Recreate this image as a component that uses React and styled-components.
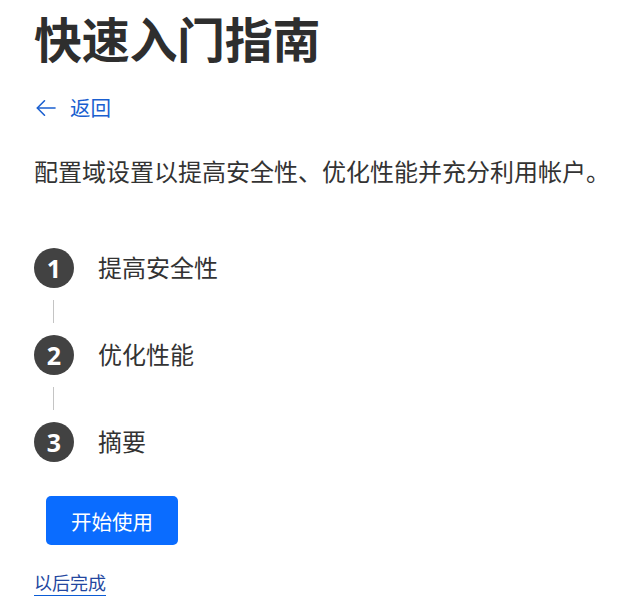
import React from 'react'
import styled, { createGlobalStyle } from 'styled-components'

const GlobalStyle = createGlobalStyle`
  html, body {
    margin: 0;
    padding: 0;
    background: #ffffff;
  }
  body {
    font-family: "Noto Sans", "Noto Sans CJK SC", sans-serif;
    color: #333333;
  }
`

const steps = [
  { id: 1, title: '提高安全性' },
  { id: 2, title: '优化性能' },
  { id: 3, title: '摘要' },
]

function BackArrow() {
  return (
    <svg width="22" height="20" viewBox="0 0 22 20" fill="none" stroke="currentColor"
      strokeWidth="1.6" strokeLinecap="round" strokeLinejoin="round">
      <path d="M21 10H3.5" />
      <path d="M10.5 2.8L3.3 10l7.2 7.2" />
    </svg>
  )
}

function App() {
  return (
    <Page>
      <GlobalStyle />
      <Title>快速入门指南</Title>
      <BackLink href="#">
        <BackArrow />
        <span>返回</span>
      </BackLink>
      <Description>配置域设置以提高安全性、优化性能并充分利用帐户。</Description>
      <StepList>
        {steps.map((step, i) => (
          <React.Fragment key={step.id}>
            <Step>
              <StepNumber>{step.id}</StepNumber>
              <StepTitle>{step.title}</StepTitle>
            </Step>
            {i < steps.length - 1 && <Connector />}
          </React.Fragment>
        ))}
      </StepList>
      <StartButton>开始使用</StartButton>
      <LaterLink href="#">以后完成</LaterLink>
    </Page>
  )
}

const Page = styled.main`
  display: flex;
  flex-direction: column;
  align-items: flex-start;
  padding: 12px 10px 0 34px;
`

const Title = styled.h1`
  margin: 0;
  font-size: 48px;
  line-height: 56px;
  font-weight: 700;
  color: #2e2e2e;
  letter-spacing: -0.3px;
`

const BackLink = styled.a`
  display: flex;
  align-items: center;
  gap: 14px;
  margin-top: 28px;
  color: #1a5fd0;
  text-decoration: none;
  font-size: 20.5px;
  line-height: 24px;
  svg {
    flex: none;
  }
`

const Description = styled.p`
  margin: 36px 0 0;
  font-size: 24px;
  line-height: 32px;
  color: #333333;
  white-space: nowrap;
`

const StepList = styled.ol`
  list-style: none;
  margin: 60px 0 0;
  padding: 0;
  display: flex;
  flex-direction: column;
`

const Step = styled.li`
  display: flex;
  align-items: center;
  gap: 24px;
`

const StepNumber = styled.span`
  width: 40px;
  height: 40px;
  border-radius: 50%;
  background: #424242;
  color: #ffffff;
  display: flex;
  align-items: center;
  justify-content: center;
  font-family: "Open Sans", "Noto Sans", sans-serif;
  font-weight: 700;
  font-size: 25px;
  line-height: 1;
`

const StepTitle = styled.span`
  font-size: 24px;
  line-height: 32px;
  color: #333333;
`

const Connector = styled.li`
  width: 1px;
  height: 23px;
  margin: 12px 0 12px 19px;
  background: #c4c4c4;
`

const StartButton = styled.button`
  margin: 34px 0 0 12px;
  height: 49px;
  padding: 0 25px;
  border: none;
  border-radius: 5px;
  background: #0a6cff;
  color: #ffffff;
  font-family: "Noto Sans", "Noto Sans CJK SC", sans-serif;
  font-size: 20.5px;
  cursor: pointer;
`

const LaterLink = styled.a`
  margin-top: 27px;
  display: inline-block;
  font-size: 18px;
  line-height: 22px;
  padding-bottom: 1px;
  color: #24479f;
  text-decoration: none;
  border-bottom: 1px solid #0b5cd5;
`

export default App
